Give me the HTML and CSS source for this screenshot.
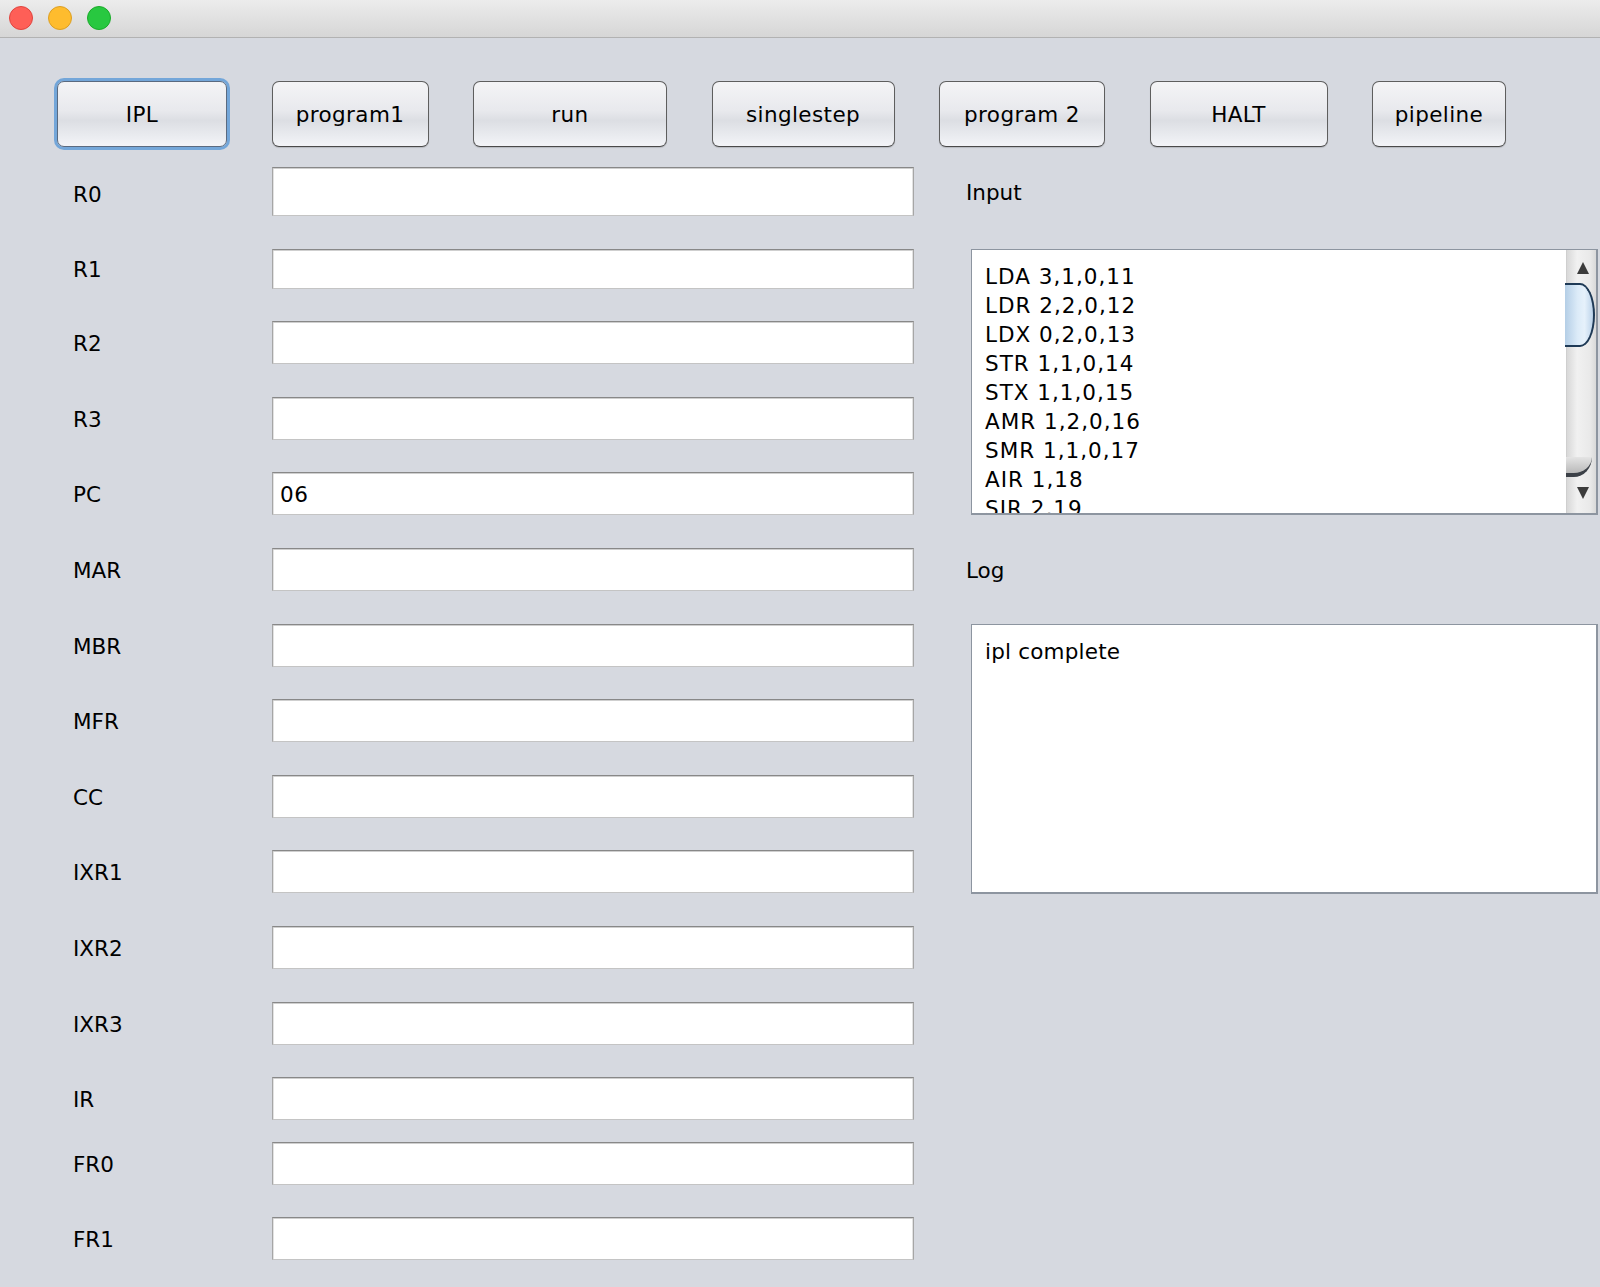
FILE: index.html
```html
<!DOCTYPE html>
<html>
<head>
<meta charset="utf-8">
<title>Simulator</title>
<link rel="stylesheet" href="styles.css">
</head>
<body>
<div class="window">
  <div class="titlebar">
    <span class="light red"></span>
    <span class="light yellow"></span>
    <span class="light green"></span>
  </div>
  <div class="content">
    <div class="toolbar">
      <button class="btn btn-ipl focused">IPL</button>
      <button class="btn btn-p1">program1</button>
      <button class="btn btn-run">run</button>
      <button class="btn btn-step">singlestep</button>
      <button class="btn btn-p2">program 2</button>
      <button class="btn btn-halt">HALT</button>
      <button class="btn btn-pipe">pipeline</button>
    </div>
    <div class="main">
      <div class="regs">
        <div class="row row-first"><span class="lbl">R0</span><div class="field"></div></div>
        <div class="row row-short"><span class="lbl">R1</span><div class="field"></div></div>
        <div class="row"><span class="lbl">R2</span><div class="field"></div></div>
        <div class="row"><span class="lbl">R3</span><div class="field"></div></div>
        <div class="row"><span class="lbl">PC</span><div class="field">06</div></div>
        <div class="row"><span class="lbl">MAR</span><div class="field"></div></div>
        <div class="row"><span class="lbl">MBR</span><div class="field"></div></div>
        <div class="row"><span class="lbl">MFR</span><div class="field"></div></div>
        <div class="row"><span class="lbl">CC</span><div class="field"></div></div>
        <div class="row"><span class="lbl">IXR1</span><div class="field"></div></div>
        <div class="row"><span class="lbl">IXR2</span><div class="field"></div></div>
        <div class="row"><span class="lbl">IXR3</span><div class="field"></div></div>
        <div class="row"><span class="lbl">IR</span><div class="field"></div></div>
        <div class="row row-tight"><span class="lbl">FR0</span><div class="field"></div></div>
        <div class="row"><span class="lbl">FR1</span><div class="field"></div></div>
      </div>
      <div class="side">
        <div class="side-label side-label-input">Input</div>
        <div class="textbox input-box">
          <div class="text code">LDA 3,1,0,11<br>LDR 2,2,0,12<br>LDX 0,2,0,13<br>STR 1,1,0,14<br>STX 1,1,0,15<br>AMR 1,2,0,16<br>SMR 1,1,0,17<br>AIR 1,18<br>SIR 2,19</div>
          <div class="scrollbar">
            <div class="arrow arrow-up"><svg width="12" height="12" viewBox="0 0 12 12"><polygon points="6,0 12,12 0,12" fill="#3b3b3b"/></svg></div>
            <div class="thumb"></div>
            <div class="track"></div>
            <div class="track-end"></div>
            <div class="arrow arrow-down"><svg width="12" height="12" viewBox="0 0 12 12"><polygon points="0,0 12,0 6,12" fill="#3b3b3b"/></svg></div>
          </div>
        </div>
        <div class="side-label side-label-log">Log</div>
        <div class="textbox log-box">
          <div class="text">ipl complete</div>
        </div>
      </div>
    </div>
  </div>
</div>
</body>
</html>
```
FILE: styles.css
```css
* { box-sizing: border-box; }
html, body { margin: 0; padding: 0; }
body {
  background: #d6d9e0;
  font-family: "DejaVu Sans", "Liberation Sans", sans-serif;
  color: #000;
}
.window {
  width: 1600px;
  height: 1287px;
  overflow: hidden;
  background: #d6d9e0;
}
.titlebar {
  height: 38px;
  background: linear-gradient(#ececec, #d6d6d6);
  border-bottom: 1px solid #b2b2b2;
  display: flex;
  align-items: center;
  padding-left: 9px;
  gap: 15px;
  padding-bottom: 2px;
}
.light {
  width: 24px;
  height: 24px;
  border-radius: 50%;
  display: block;
}
.red { background: #fe5f57; border: 1px solid #e0443e; }
.yellow { background: #febc2e; border: 1px solid #dc9f23; }
.green { background: #28c840; border: 1px solid #1aab29; }

.content { padding-top: 43px; }
.toolbar {
  display: flex;
  gap: 44.5px;
  padding-left: 57px;
  height: 66px;
}
.btn {
  height: 66px;
  border: 1px solid #5e5e5e;
  border-bottom-color: #4a4a4a;
  border-radius: 7px;
  background: linear-gradient(#f4f4f6 0%, #e8e9ed 45%, #dcdee3 60%, #eaecf0 85%, #f3f4f8 100%);
  font-family: "DejaVu Sans", "Liberation Sans", sans-serif;
  font-size: 21.5px;
  letter-spacing: 0.4px;
  color: #000;
  padding: 0;
  box-shadow: 0 1px 1px rgba(0,0,0,0.15);
}
.focused { box-shadow: 0 0 0 3px #73a6d9; border-color: #5a6a80; }
.btn-ipl { width: 170px; }
.btn-p1 { width: 157px; }
.btn-run { width: 194px; }
.btn-step { width: 183px; }
.btn-p2 { width: 166px; }
.btn-halt { width: 178px; }
.btn-pipe { width: 134px; }

.main {
  display: flex;
  padding-top: 20px;
}
.regs {
  display: flex;
  flex-direction: column;
  gap: 32.6px;
  padding-left: 73px;
  width: 914px;
}
.row {
  display: flex;
  align-items: center;
  height: 43px;
}
.row-first { height: 49px; }
.row-short { height: 40px; }
.row-tight { margin-top: -11px; }
.lbl {
  width: 199px;
  font-size: 21.5px;
  padding-top: 2px;
}
.row-first .lbl { padding-top: 6px; }
.field {
  width: 642px;
  height: 100%;
  background: #fff;
  border: 1px solid #a6a6a6;
  border-top-color: #888;
  border-bottom-color: #c4c4c4;
  box-shadow: inset 0 1px 0 #cfcfcf, inset 1px 0 0 #e2e2e2, inset -1px 0 0 #e2e2e2;
  font-size: 21.5px;
  letter-spacing: 0.6px;
  padding-left: 7px;
  display: flex;
  align-items: center;
  padding-top: 2px;
}

.side {
  display: flex;
  flex-direction: column;
  margin-left: 52px;
  width: 634px;
}
.side-label {
  font-size: 21.5px;
  display: flex;
  align-items: center;
  padding-top: 2px;
}
.side-label-input { height: 49px; }
.side-label-log { height: 43px; margin-top: 33px; }
.textbox {
  margin-left: 5px;
  width: 627px;
  background: #fff;
  border: 1px solid #8d95a0;
  border-right-width: 2px;
  border-bottom-width: 2px;
  margin-top: 33px;
  display: flex;
  overflow: hidden;
}
.input-box { height: 266px; }
.log-box { height: 270px; }
.text {
  flex: 1;
  font-size: 21.5px;
  line-height: 29px;
  padding: 12px 13px;
  overflow: hidden;
  white-space: nowrap;
  letter-spacing: 0.2px;
}
.code { letter-spacing: 1px; }
.scrollbar {
  width: 30px;
  display: flex;
  flex-direction: column;
  background: linear-gradient(to right, #d8d8d8, #f1f1f1 35%, #e9e9e9 80%, #d9d9d9);
  border-left: 1px solid #cfcfcf;
}
.arrow {
  display: flex;
  justify-content: center;
  align-items: center;
  padding-left: 2px;
}
.arrow-up { height: 33px; padding-top: 2px; }
.arrow-down { height: 36px; padding-bottom: 4px; }
.thumb {
  height: 64px;
  margin-left: -2px;
  width: 30px;
  border: 2px solid #1f3a56;
  border-left: none;
  border-radius: 0 50% 50% 0 / 0 50% 50% 0;
  background: linear-gradient(to right, #b4cee6, #dcebf8 45%, #e6f1fb 70%, #bcd3ea);
}
.track { flex: 1; }
.track-end {
  height: 20px;
  margin-left: -1px;
  width: 26px;
  border-bottom: 4px solid #3c4148;
  border-radius: 0 0 70% 0 / 0 0 100% 0;
  background: linear-gradient(#e4e4e4, #b9b9b9);
}
```
